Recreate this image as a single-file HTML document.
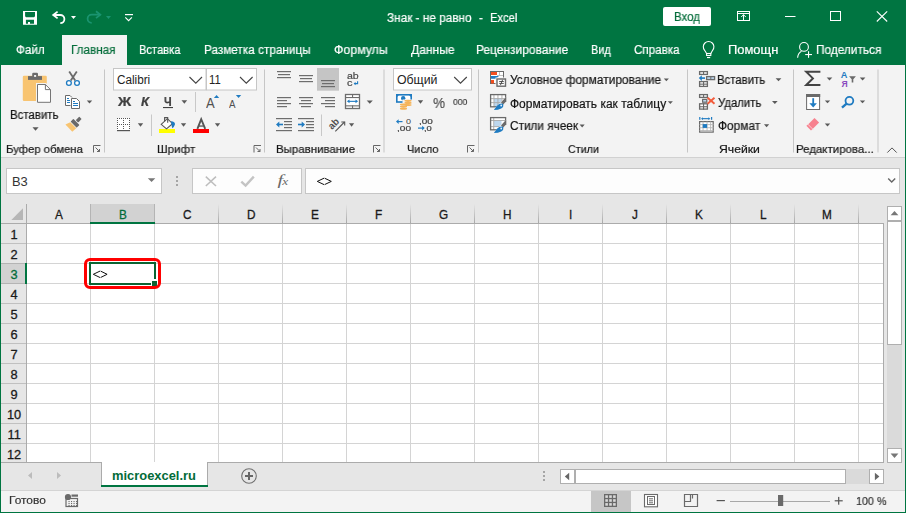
<!DOCTYPE html>
<html><head><meta charset="utf-8"><style>
*{margin:0;padding:0;box-sizing:border-box}
html,body{width:906px;height:513px;overflow:hidden;background:#e6e6e6;position:relative}
body{font-family:"Liberation Sans",sans-serif}
.t{position:absolute;white-space:pre;transform-origin:0 0;font-family:"Liberation Sans",sans-serif}
.g{will-change:transform;-webkit-text-stroke:0.2px currentColor}
.a{position:absolute}
svg{position:absolute;overflow:visible}
</style></head><body>
<div class="a" style="left:0;top:0;width:906px;height:65px;background:#007541"></div>
<div class="a" style="left:1px;top:65px;width:904px;height:92px;background:#f3f3f3"></div>
<div class="a" style="left:1px;top:157px;width:904px;height:1px;background:#d1d1d1"></div>
<div class="a" style="left:62px;top:35px;width:65px;height:30px;background:#f3f3f3"></div>
<div class="a" style="left:663px;top:7px;width:48px;height:19px;background:#fff;border-radius:2px"></div>
<div class="a" style="left:6px;top:168px;width:156px;height:26px;background:#fff;border:1px solid #c6c6c6"></div>
<div class="a" style="left:192px;top:168px;width:110px;height:26px;background:#fdfdfd;border:1px solid #c6c6c6"></div>
<div class="a" style="left:305px;top:168px;width:595px;height:26px;background:#fdfdfd;border:1px solid #c6c6c6"></div>
<div class="a" style="left:27px;top:224px;width:857px;height:239px;background:#fff"></div>
<svg style="left:0;top:0" width="906" height="513"><rect x="90" y="224" width="1" height="238" fill="#d4d4d4"/><rect x="154" y="224" width="1" height="238" fill="#d4d4d4"/><rect x="218" y="224" width="1" height="238" fill="#d4d4d4"/><rect x="282" y="224" width="1" height="238" fill="#d4d4d4"/><rect x="346" y="224" width="1" height="238" fill="#d4d4d4"/><rect x="410" y="224" width="1" height="238" fill="#d4d4d4"/><rect x="474" y="224" width="1" height="238" fill="#d4d4d4"/><rect x="538" y="224" width="1" height="238" fill="#d4d4d4"/><rect x="602" y="224" width="1" height="238" fill="#d4d4d4"/><rect x="666" y="224" width="1" height="238" fill="#d4d4d4"/><rect x="730" y="224" width="1" height="238" fill="#d4d4d4"/><rect x="794" y="224" width="1" height="238" fill="#d4d4d4"/><rect x="858" y="224" width="1" height="238" fill="#d4d4d4"/><rect x="27" y="243" width="856" height="1" fill="#d4d4d4"/><rect x="27" y="263" width="856" height="1" fill="#d4d4d4"/><rect x="27" y="283" width="856" height="1" fill="#d4d4d4"/><rect x="27" y="303" width="856" height="1" fill="#d4d4d4"/><rect x="27" y="323" width="856" height="1" fill="#d4d4d4"/><rect x="27" y="343" width="856" height="1" fill="#d4d4d4"/><rect x="27" y="363" width="856" height="1" fill="#d4d4d4"/><rect x="27" y="383" width="856" height="1" fill="#d4d4d4"/><rect x="27" y="403" width="856" height="1" fill="#d4d4d4"/><rect x="27" y="423" width="856" height="1" fill="#d4d4d4"/><rect x="27" y="443" width="856" height="1" fill="#d4d4d4"/></svg>
<div class="a" style="left:883px;top:223px;width:1px;height:240px;background:#ababab"></div>
<div class="a" style="left:1px;top:462px;width:883px;height:1px;background:#ababab"></div>
<div class="a" style="left:1px;top:223px;width:883px;height:1px;background:#ababab"></div>
<div class="a" style="left:26px;top:204px;width:1px;height:258px;background:#ababab"></div>
<svg style="left:0;top:0" width="906" height="513"><defs><linearGradient id="hg" x1="0" y1="0" x2="0" y2="1"><stop offset="0" stop-color="#e6e6e6"/><stop offset="1" stop-color="#a8a8a8"/></linearGradient></defs><rect x="90" y="204" width="1" height="19" fill="url(#hg)"/><rect x="154" y="204" width="1" height="19" fill="url(#hg)"/><rect x="218" y="204" width="1" height="19" fill="url(#hg)"/><rect x="282" y="204" width="1" height="19" fill="url(#hg)"/><rect x="346" y="204" width="1" height="19" fill="url(#hg)"/><rect x="410" y="204" width="1" height="19" fill="url(#hg)"/><rect x="474" y="204" width="1" height="19" fill="url(#hg)"/><rect x="538" y="204" width="1" height="19" fill="url(#hg)"/><rect x="602" y="204" width="1" height="19" fill="url(#hg)"/><rect x="666" y="204" width="1" height="19" fill="url(#hg)"/><rect x="730" y="204" width="1" height="19" fill="url(#hg)"/><rect x="794" y="204" width="1" height="19" fill="url(#hg)"/><rect x="858" y="204" width="1" height="19" fill="url(#hg)"/><rect x="1" y="243" width="25" height="1" fill="#c0c0c0"/><rect x="1" y="263" width="25" height="1" fill="#c0c0c0"/><rect x="1" y="283" width="25" height="1" fill="#c0c0c0"/><rect x="1" y="303" width="25" height="1" fill="#c0c0c0"/><rect x="1" y="323" width="25" height="1" fill="#c0c0c0"/><rect x="1" y="343" width="25" height="1" fill="#c0c0c0"/><rect x="1" y="363" width="25" height="1" fill="#c0c0c0"/><rect x="1" y="383" width="25" height="1" fill="#c0c0c0"/><rect x="1" y="403" width="25" height="1" fill="#c0c0c0"/><rect x="1" y="423" width="25" height="1" fill="#c0c0c0"/><rect x="1" y="443" width="25" height="1" fill="#c0c0c0"/><rect x="1" y="463" width="25" height="1" fill="#c0c0c0"/></svg>
<div class="a" style="left:91px;top:204px;width:63px;height:19px;background:#d2d2d2"></div>
<div class="a" style="left:90px;top:204px;width:1px;height:19px;background:#b4b4b4"></div>
<div class="a" style="left:154px;top:204px;width:1px;height:19px;background:#b4b4b4"></div>
<div class="a" style="left:90px;top:222px;width:65px;height:2px;background:#007541"></div>
<div class="a" style="left:1px;top:264px;width:25px;height:19px;background:#d2d2d2"></div>
<div class="a" style="left:1px;top:263px;width:25px;height:1px;background:#b4b4b4"></div>
<div class="a" style="left:1px;top:283px;width:25px;height:1px;background:#b4b4b4"></div>
<div class="a" style="left:25px;top:263px;width:2px;height:21px;background:#007541"></div>
<svg style="left:0;top:0" width="30" height="230"><polygon points="23,208.3 23,220 11.3,220" fill="#b6b6b6"/></svg>
<div class="a" style="left:89px;top:262px;width:67px;height:23px;border:2px solid #0b6433"></div>
<div class="a" style="left:151px;top:279px;width:7px;height:7px;background:#fff"></div>
<div class="a" style="left:152px;top:281px;width:5px;height:5px;background:#0b6433"></div>
<div class="a" style="left:84px;top:258px;width:77px;height:31px;border:3px solid #f00;border-radius:6px"></div>
<div class="a" style="left:887px;top:206px;width:15px;height:257px;background:#dadada"></div>
<div class="a" style="left:887px;top:206px;width:15px;height:15px;background:#fff;border:1px solid #afafaf"></div>
<div class="a" style="left:887px;top:221px;width:15px;height:124px;background:#fff;border:1px solid #afafaf"></div>
<div class="a" style="left:887px;top:448px;width:15px;height:15px;background:#fff;border:1px solid #afafaf"></div>
<div class="a" style="left:1px;top:463px;width:904px;height:27px;background:#e6e6e6"></div>
<div class="a" style="left:101px;top:462px;width:107px;height:25px;background:#fff;border-left:1px solid #ababab;border-right:1px solid #ababab"></div>
<div class="a" style="left:101px;top:485px;width:107px;height:2px;background:#007541"></div>
<div class="a" style="left:560px;top:469px;width:324px;height:15px;background:#dadada"></div>
<div class="a" style="left:560px;top:469px;width:15px;height:15px;background:#fff;border:1px solid #afafaf"></div>
<div class="a" style="left:575px;top:469px;width:271px;height:15px;background:#fff;border:1px solid #afafaf"></div>
<div class="a" style="left:869px;top:469px;width:15px;height:15px;background:#fff;border:1px solid #afafaf"></div>
<div class="a" style="left:1px;top:490px;width:904px;height:1px;background:#d4d4d4"></div>
<div class="a" style="left:1px;top:491px;width:904px;height:21px;background:#f3f3f3"></div>
<div class="a" style="left:591px;top:491px;width:40px;height:21px;background:#c6c6c6"></div>
<svg style="left:0;top:0" width="906" height="513" viewBox="0 0 906 513"><path d="M23,11 H37 V24.8 H23 Z M25.1,12.1 H35 V16.2 L34.1,17.2 H26 L25.1,16.2 Z M25.9,19.8 H34 V23.7 H30 V21.9 H28 V23.7 H25.9 Z" fill="#fff" stroke="none" stroke-width="1" fill-rule="evenodd"/>
<path d="M53.2,15 H60.3 A4.1,4.1 0 0 1 60.3,23.2" fill="none" stroke="#fff" stroke-width="1.8" />
<path d="M57.6,11.6 L53.2,15 L57.6,18.4" fill="none" stroke="#fff" stroke-width="1.8" stroke-linejoin="miter"/>
<polygon points="71,16 76,16 73.5,19" fill="#fff"/>
<path d="M100.3,14.7 H91.7 A4.1,4.1 0 0 0 91.7,22.9" fill="none" stroke="#1a9470" stroke-width="1.8" />
<path d="M96,11.3 L100.3,14.7 L96,18.1" fill="none" stroke="#1a9470" stroke-width="1.8" />
<polygon points="106,16 111,16 108.5,19" fill="#1a9470"/>
<rect x="125" y="14" width="8" height="1.2" fill="#fff"/>
<path d="M125.3,17.3 L128.6,20.6 L131.9,17.3" fill="none" stroke="#fff" stroke-width="1.1" />
<rect x="737.5" y="11.5" width="12" height="9" fill="none" stroke="#fff" stroke-width="1"/>
<line x1="738" y1="13.5" x2="749" y2="13.5" stroke="#fff" stroke-width="1" />
<line x1="743.5" y1="14.5" x2="743.5" y2="21" stroke="#fff" stroke-width="1" />
<path d="M741.2,17 L743.5,14.7 L745.8,17" fill="none" stroke="#fff" stroke-width="1" />
<rect x="785" y="16" width="10.5" height="1" fill="#fff"/>
<rect x="830.5" y="11.5" width="10" height="9" fill="none" stroke="#fff" stroke-width="1"/>
<line x1="876.8" y1="11.3" x2="887.2" y2="21.5" stroke="#fff" stroke-width="1.1" />
<line x1="887.2" y1="11.3" x2="876.8" y2="21.5" stroke="#fff" stroke-width="1.1" />
<path d="M706.6,53.5 L704.6,50.3 A5.3,5.3 0 1 1 712.6,50.3 L710.8,53.5 Z" fill="none" stroke="#fff" stroke-width="1.1" />
<rect x="706.6" y="53.5" width="4.2" height="2" fill="none" stroke="#fff" stroke-width="1.1"/>
<rect x="707" y="57" width="3.2" height="1.1" fill="#fff"/>
<circle cx="804" cy="46.9" r="4.4" fill="none" stroke="#fff" stroke-width="1.1"/>
<path d="M801.5,51.2 Q798,53 797.6,57.7" fill="none" stroke="#fff" stroke-width="1.1" />
<rect x="805.2" y="54" width="6.8" height="1.1" fill="#fff"/>
<rect x="808" y="51.2" width="1.1" height="6.6" fill="#fff"/>
<rect x="22.8" y="75.8" width="24" height="25.2" rx="1.2" fill="#f8c471"/>
<rect x="28" y="76.1" width="14" height="3.8" fill="#6b6b6b"/>
<rect x="32.2" y="72.8" width="5.8" height="4" rx="1.2" fill="#6b6b6b"/>
<rect x="34.1" y="75" width="2" height="1.9" fill="#f3f3f3"/>
<path d="M36,83 H46 L52,89 V103.8 H36 Z" fill="#f3f3f3" stroke="none" stroke-width="1" />
<path d="M37.5,84.5 H45.4 L50.5,89.6 V102.3 H37.5 Z" fill="#fff" stroke="#757575" stroke-width="1" />
<path d="M45.4,84.5 V89.6 H50.5" fill="none" stroke="#757575" stroke-width="1" />
<polygon points="32.5,127.2 38.6,127.2 35.55,130.7" fill="#5a5a5a"/>
<path d="M69.2,71.6 L75.2,80.6" fill="none" stroke="#6a6a6a" stroke-width="1.8" />
<path d="M76.8,71.6 L70.8,80.6" fill="none" stroke="#6a6a6a" stroke-width="1.8" />
<circle cx="68.9" cy="83" r="2.4" fill="#fff" stroke="#1f7bc1" stroke-width="1.3"/>
<circle cx="77" cy="83" r="2.4" fill="#fff" stroke="#1f7bc1" stroke-width="1.3"/>
<path d="M65.5,95.5 H70 L72,97.5 V105.5 H65.5 Z" fill="#fff" stroke="#6a6a6a" stroke-width="1" />
<rect x="67" y="98" width="2" height="1" fill="#1f7bc1"/>
<rect x="67" y="100" width="3" height="1" fill="#1f7bc1"/>
<rect x="67" y="102" width="3" height="1" fill="#1f7bc1"/>
<path d="M70.5,97.5 H77 L80,100.5 V109.5 H70.5 Z" fill="#f3f3f3" stroke="none" stroke-width="1" />
<path d="M71.5,98.5 H76.5 L79.5,101.5 V108.5 H71.5 Z" fill="#fff" stroke="#6a6a6a" stroke-width="1" />
<rect x="73" y="101" width="2" height="1" fill="#1f7bc1"/>
<rect x="73" y="103" width="5" height="1" fill="#1f7bc1"/>
<rect x="73" y="105" width="5" height="1" fill="#1f7bc1"/>
<polygon points="86.8,100.4 92.2,100.4 89.5,103.5" fill="#5a5a5a"/>
<g transform="translate(74.9,123.4) rotate(45)"><polygon points="-4.2,2.4 4.3,2.4 4.1,7.8 -6,7.4" fill="#f8c471"/><rect x="-4.3" y="-2.1" width="8.6" height="3.9" rx="0.6" fill="#6a6a6a"/><rect x="-1.7" y="-7.9" width="3.4" height="4.9" rx="0.5" fill="#6a6a6a"/></g>
<rect x="113.5" y="68.5" width="92.5" height="21.5" fill="#fff" stroke="#c6c6c6"/>
<rect x="206.5" y="68.5" width="50" height="21.5" fill="#fff" stroke="#c6c6c6"/>
<path d="M189.5,77 L195.8,83.2 L202,77" fill="none" stroke="#444" stroke-width="1.1" />
<path d="M240,77 L246.3,83.2 L252.6,77" fill="none" stroke="#444" stroke-width="1.1" />
<polygon points="181.5,100.2 187.2,100.2 184.35,103.7" fill="#5a5a5a"/>
<rect x="163" y="107" width="10" height="1.1" fill="#404040"/>
<polygon points="213.9,97.9 219.2,97.9 216.55,95" fill="#1f7bc1"/>
<polygon points="235.9,95 241.2,95 238.55,97.9" fill="#1f7bc1"/>
<rect x="195" y="92" width="1" height="20" fill="#c8c8c8"/>
<rect x="151" y="114.5" width="1" height="21.5" fill="#c8c8c8"/>
<rect x="321" y="114.5" width="1" height="21.5" fill="#c8c8c8"/>
<rect x="117" y="118" width="13" height="12" fill="#fff"/>
<rect x="117" y="118" width="1" height="1" fill="#555"/>
<rect x="117" y="124" width="1" height="1" fill="#555"/>
<rect x="119" y="118" width="1" height="1" fill="#555"/>
<rect x="119" y="124" width="1" height="1" fill="#555"/>
<rect x="121" y="118" width="1" height="1" fill="#555"/>
<rect x="121" y="124" width="1" height="1" fill="#555"/>
<rect x="123" y="118" width="1" height="1" fill="#555"/>
<rect x="123" y="124" width="1" height="1" fill="#555"/>
<rect x="125" y="118" width="1" height="1" fill="#555"/>
<rect x="125" y="124" width="1" height="1" fill="#555"/>
<rect x="127" y="118" width="1" height="1" fill="#555"/>
<rect x="127" y="124" width="1" height="1" fill="#555"/>
<rect x="129" y="118" width="1" height="1" fill="#555"/>
<rect x="129" y="124" width="1" height="1" fill="#555"/>
<rect x="117" y="120" width="1" height="1" fill="#555"/>
<rect x="123" y="120" width="1" height="1" fill="#555"/>
<rect x="129" y="120" width="1" height="1" fill="#555"/>
<rect x="117" y="122" width="1" height="1" fill="#555"/>
<rect x="123" y="122" width="1" height="1" fill="#555"/>
<rect x="129" y="122" width="1" height="1" fill="#555"/>
<rect x="117" y="126" width="1" height="1" fill="#555"/>
<rect x="123" y="126" width="1" height="1" fill="#555"/>
<rect x="129" y="126" width="1" height="1" fill="#555"/>
<rect x="117" y="128" width="1" height="1" fill="#555"/>
<rect x="123" y="128" width="1" height="1" fill="#555"/>
<rect x="129" y="128" width="1" height="1" fill="#555"/>
<rect x="117" y="130" width="13" height="1.2" fill="#555"/>
<polygon points="137.8,123.2 143.2,123.2 140.5,126.7" fill="#5a5a5a"/>
<rect x="159" y="129" width="16" height="4" fill="#ffff00"/>
<polygon points="161.2,124.3 167.4,118.7 172.5,123.7 166.5,128.8" fill="#fff" stroke="#555" stroke-width="1.1"/>
<path d="M164.6,121.4 V117.6 H167.7 V122.8" fill="none" stroke="#555" stroke-width="1.1" />
<path d="M170.8,121.3 Q175.5,121.5 174.9,124.5 Q174.2,127 172.2,128.2 Z" fill="#1f7bc1" stroke="none" stroke-width="1" />
<polygon points="180.9,123.3 186.2,123.3 183.55,126.7" fill="#5a5a5a"/>
<rect x="193" y="129" width="16" height="4" fill="#ff0000"/>
<path d="M197.4,128.8 L201.2,119.2 L205.2,128.8" fill="none" stroke="#555" stroke-width="1.9" />
<rect x="199" y="125.4" width="4.5" height="1.3" fill="#555"/>
<polygon points="214.9,123.3 220.2,123.3 217.55,126.7" fill="#5a5a5a"/>
<rect x="317" y="68" width="22" height="22.7" fill="#c5c5c5"/>
<rect x="277" y="71" width="14" height="1.2" fill="#6d6d6d"/>
<rect x="278" y="74" width="12" height="1.2" fill="#6d6d6d"/>
<rect x="277" y="77" width="14" height="1.2" fill="#6d6d6d"/>
<rect x="299" y="75" width="14" height="1.2" fill="#6d6d6d"/>
<rect x="300" y="78" width="12" height="1.2" fill="#6d6d6d"/>
<rect x="299" y="81" width="14" height="1.2" fill="#6d6d6d"/>
<rect x="321" y="80" width="14" height="1.2" fill="#6d6d6d"/>
<rect x="322" y="83" width="12" height="1.2" fill="#6d6d6d"/>
<rect x="321" y="86" width="14" height="1.2" fill="#6d6d6d"/>
<rect x="277" y="97" width="14" height="1.2" fill="#6d6d6d"/>
<rect x="277" y="100" width="10" height="1.2" fill="#6d6d6d"/>
<rect x="277" y="103" width="14" height="1.2" fill="#6d6d6d"/>
<rect x="277" y="106" width="10" height="1.2" fill="#6d6d6d"/>
<rect x="299" y="97" width="14" height="1.2" fill="#6d6d6d"/>
<rect x="301" y="100" width="10" height="1.2" fill="#6d6d6d"/>
<rect x="299" y="103" width="14" height="1.2" fill="#6d6d6d"/>
<rect x="301" y="106" width="10" height="1.2" fill="#6d6d6d"/>
<rect x="321" y="97" width="14" height="1.2" fill="#6d6d6d"/>
<rect x="325" y="100" width="10" height="1.2" fill="#6d6d6d"/>
<rect x="321" y="103" width="14" height="1.2" fill="#6d6d6d"/>
<rect x="325" y="106" width="10" height="1.2" fill="#6d6d6d"/>
<path d="M357.6,81.3 V83.6 H354.5" fill="none" stroke="#1f7bc1" stroke-width="1.1" />
<polygon points="353.6,83.6 355.6,82 355.6,85.2" fill="#1f7bc1"/>
<rect x="345.5" y="94.5" width="14" height="14" fill="#fff" stroke="#6d6d6d" stroke-width="1.3"/>
<rect x="345.5" y="97" width="14" height="1.1" fill="#6d6d6d"/>
<rect x="345.5" y="105.3" width="14" height="1.1" fill="#6d6d6d"/>
<rect x="352" y="94.5" width="1.1" height="3" fill="#6d6d6d"/>
<rect x="352" y="105.5" width="1.1" height="3" fill="#6d6d6d"/>
<rect x="348" y="100.8" width="9" height="1.1" fill="#1f7bc1"/>
<polygon points="346.9,101.35 349.5,99.4 349.5,103.3" fill="#1f7bc1"/>
<polygon points="358.1,101.35 355.5,99.4 355.5,103.3" fill="#1f7bc1"/>
<polygon points="366.7,100.5 372.8,100.5 369.75,103.7" fill="#5a5a5a"/>
<rect x="276" y="118" width="16" height="1.2" fill="#6d6d6d"/>
<rect x="276" y="130" width="16" height="1.2" fill="#6d6d6d"/>
<rect x="284" y="121" width="8" height="1.2" fill="#6d6d6d"/>
<rect x="284" y="124" width="8" height="1.2" fill="#6d6d6d"/>
<rect x="284" y="127" width="8" height="1.2" fill="#6d6d6d"/>
<rect x="278.5" y="123.7" width="4.5" height="1.6" fill="#1f7bc1"/>
<polygon points="276,124.5 279.3,121.6 279.3,127.4" fill="#1f7bc1"/>
<rect x="298" y="118" width="16" height="1.2" fill="#6d6d6d"/>
<rect x="298" y="130" width="16" height="1.2" fill="#6d6d6d"/>
<rect x="306" y="121" width="8" height="1.2" fill="#6d6d6d"/>
<rect x="306" y="124" width="8" height="1.2" fill="#6d6d6d"/>
<rect x="306" y="127" width="8" height="1.2" fill="#6d6d6d"/>
<rect x="298" y="123.7" width="4.5" height="1.6" fill="#1f7bc1"/>
<polygon points="305,124.5 301.7,121.6 301.7,127.4" fill="#1f7bc1"/>
<line x1="335.3" y1="131.3" x2="344.5" y2="122" stroke="#555" stroke-width="1.1" />
<path d="M341.3,122 H344.7 V125.4" fill="none" stroke="#555" stroke-width="1.1" />
<polygon points="349.0,123.2 354.2,123.2 351.6,126.7" fill="#5a5a5a"/>
<rect x="393.5" y="68.5" width="78" height="21.5" fill="#fff" stroke="#c6c6c6"/>
<path d="M454.2,77 L460.5,83.2 L466.8,77" fill="none" stroke="#444" stroke-width="1.1" />
<rect x="396.8" y="94.8" width="14.4" height="7.2" fill="#fff" stroke="#1f7bc1" stroke-width="1.6"/>
<polygon points="396,94 400,94 396,98" fill="#1f7bc1"/><polygon points="412,94 408,94 412,98" fill="#1f7bc1"/>
<circle cx="403.2" cy="98.3" r="2.2" fill="#1f7bc1"/>
<rect x="402.5" y="99.5" width="10" height="10.5" fill="#f3f3f3"/>
<ellipse cx="408" cy="100.8" rx="3.6" ry="1.1" fill="#f5b45a"/>
<ellipse cx="408" cy="102.9" rx="3.6" ry="1.1" fill="#f5b45a"/>
<ellipse cx="408" cy="105" rx="3.6" ry="1.1" fill="#f5b45a"/>
<ellipse cx="403.5" cy="104.5" rx="3.6" ry="1.1" fill="#f5b45a"/>
<ellipse cx="403.5" cy="106.6" rx="3.6" ry="1.1" fill="#f5b45a"/>
<ellipse cx="403.5" cy="108.7" rx="3.6" ry="1.1" fill="#f5b45a"/>
<polygon points="417.8,100.2 423.2,100.2 420.5,103.7" fill="#5a5a5a"/>
<rect x="397.5" y="121" width="5" height="1.2" fill="#1f7bc1"/>
<polygon points="396,121.6 398.6,119.2 398.6,124" fill="#1f7bc1"/>
<rect x="418" y="127.5" width="5.5" height="1.2" fill="#1f7bc1"/>
<polygon points="424.7,128.1 422.1,125.7 422.1,130.5" fill="#1f7bc1"/>
<rect x="490.5" y="71.5" width="13" height="12" fill="#fff" stroke="#6a6a6a" stroke-width="1"/>
<rect x="491" y="72" width="6" height="3" fill="#f24e1e"/>
<polygon points="491,76 499,76 496,78.8 491,78.8" fill="#1f7bc1"/>
<rect x="491" y="80" width="3" height="3.5" fill="#f24e1e"/>
<rect x="499" y="72" width="0.8" height="3.5" fill="#b0b0b0"/>
<rect x="497" y="75" width="6" height="0.8" fill="#b0b0b0"/>
<rect x="495.5" y="77.5" width="11.5" height="10" fill="#f3f3f3"/>
<rect x="497" y="79" width="8.5" height="7.2" fill="#fff" stroke="#6a6a6a" stroke-width="1.4"/>
<rect x="499.2" y="81" width="4.6" height="0.9" fill="#444"/>
<rect x="499.2" y="82.9" width="4.6" height="0.9" fill="#444"/>
<line x1="502.6" y1="79.8" x2="500.4" y2="85.2" stroke="#444" stroke-width="0.9" />
<rect x="490.6" y="94.6" width="15" height="12.2" fill="#fff"/>
<rect x="494" y="98.5" width="7.5" height="8" fill="#bdd7ee"/>
<rect x="493.5" y="95" width="0.9" height="12" fill="#a8a8a8"/>
<rect x="497.5" y="95" width="0.9" height="12" fill="#a8a8a8"/>
<rect x="501.5" y="95" width="0.9" height="12" fill="#a8a8a8"/>
<rect x="491" y="98.2" width="14.5" height="0.9" fill="#a8a8a8"/>
<rect x="491" y="102.2" width="14.5" height="0.9" fill="#a8a8a8"/>
<rect x="490.6" y="94.6" width="15" height="12.2" fill="none" stroke="#6a6a6a" stroke-width="1.3"/>
<polygon points="507.5,95.5 507.5,111 492,111" fill="#f3f3f3"/>
<polygon points="506.3,96.6 506.3,101.2 503.2,104.6 501,102.6" fill="#6a6a6a"/>
<path d="M493.9,109.9 Q495.6,106 499.2,104 Q502.4,102.6 503.4,104.6 Q504,106.8 501.2,108.4 Q498.2,109.9 493.9,109.9 Z" fill="#1f7bc1" stroke="none" stroke-width="1" />
<ellipse cx="501.2" cy="105.5" rx="0.9" ry="1.1" fill="#e8f1fa"/>
<rect x="490.6" y="117.6" width="15" height="12.2" fill="#fff"/>
<rect x="494" y="120.8" width="7.5" height="5.8" fill="#bdd7ee"/>
<rect x="493.3" y="118" width="0.9" height="12" fill="#a8a8a8"/>
<rect x="491" y="120.0" width="14.5" height="0.9" fill="#a8a8a8"/>
<rect x="491" y="126.2" width="14.5" height="0.9" fill="#a8a8a8"/>
<rect x="490.6" y="117.6" width="15" height="12.2" fill="none" stroke="#6a6a6a" stroke-width="1.3"/>
<polygon points="507.5,118.5 507.5,134 492,134" fill="#f3f3f3"/>
<polygon points="506.3,119.6 506.3,124.2 503.2,127.6 501,125.6" fill="#6a6a6a"/>
<path d="M493.9,132.9 Q495.6,129 499.2,127 Q502.4,125.6 503.4,127.6 Q504,129.8 501.2,131.4 Q498.2,132.9 493.9,132.9 Z" fill="#1f7bc1" stroke="none" stroke-width="1" />
<ellipse cx="501.2" cy="128.5" rx="0.9" ry="1.1" fill="#e8f1fa"/>
<polygon points="663.8,78.4 668.9000000000001,78.4 666.35,81.3" fill="#5a5a5a"/>
<polygon points="667.8,101.2 672.9000000000001,101.2 670.35,104.10000000000001" fill="#5a5a5a"/>
<polygon points="579.5999999999999,124.5 584.7,124.5 582.15,127.4" fill="#5a5a5a"/>
<rect x="699.6" y="71.6" width="7.8" height="2.8" fill="#fff" stroke="#6a6a6a" stroke-width="1.3"/>
<rect x="703.0" y="71" width="1.1" height="4" fill="#6a6a6a"/>
<rect x="699.6" y="81.6" width="7.8" height="4.8" fill="#fff" stroke="#6a6a6a" stroke-width="1.3"/>
<rect x="703.0" y="81" width="1.1" height="6" fill="#6a6a6a"/>
<rect x="699" y="83.6" width="9" height="1.1" fill="#6a6a6a"/>
<rect x="706.6" y="76.6" width="8" height="3" fill="#bdd7ee" stroke="#6a6a6a" stroke-width="1.3"/>
<rect x="710.3" y="76.6" width="1" height="3" fill="#6a6a6a"/>
<rect x="700.5" y="77.3" width="4.5" height="1.6" fill="#1f7bc1"/>
<polygon points="698.8,78.1 701.8,75.2 701.8,81" fill="#1f7bc1"/>
<polygon points="775.5999999999999,78.2 781.4000000000001,78.2 778.5,81.2" fill="#5a5a5a"/>
<rect x="699.6" y="94.6" width="7.8" height="2.8" fill="#fff" stroke="#6a6a6a" stroke-width="1.3"/>
<rect x="703.0" y="94" width="1.1" height="4" fill="#6a6a6a"/>
<rect x="702.6" y="99.4" width="4.2" height="2.8" fill="#bdd7ee" stroke="#6a6a6a" stroke-width="1.2"/>
<rect x="699.6" y="103.8" width="7.8" height="5.3" fill="#fff" stroke="#6a6a6a" stroke-width="1.3"/>
<rect x="703.0" y="103.2" width="1.1" height="6.5" fill="#6a6a6a"/>
<rect x="699" y="106.2" width="9" height="1.1" fill="#6a6a6a"/>
<line x1="707.6" y1="97.7" x2="714.5" y2="103.8" stroke="#f25c3c" stroke-width="1.9" />
<line x1="714.5" y1="97.7" x2="707.6" y2="103.8" stroke="#f25c3c" stroke-width="1.9" />
<polygon points="772.0,101.0 777.7,101.0 774.85,103.9" fill="#5a5a5a"/>
<rect x="699.2" y="117" width="1.2" height="2.8" fill="#1f7bc1"/>
<rect x="711" y="117" width="1.2" height="2.8" fill="#1f7bc1"/>
<rect x="702" y="118.1" width="7" height="1.1" fill="#1f7bc1"/>
<polygon points="701,118.65 703,117.2 703,120.1" fill="#1f7bc1"/><polygon points="710.4,118.65 708.4,117.2 708.4,120.1" fill="#1f7bc1"/>
<rect x="699.6" y="121.6" width="13.6" height="10.5" fill="#fff" stroke="#6a6a6a" stroke-width="1.2"/>
<rect x="702.6" y="121.5" width="0.9" height="10.5" fill="#b5b5b5"/>
<rect x="706.6" y="121.5" width="0.9" height="10.5" fill="#b5b5b5"/>
<rect x="710.2" y="121.5" width="0.9" height="10.5" fill="#b5b5b5"/>
<rect x="699.5" y="124.2" width="14" height="0.9" fill="#b5b5b5"/>
<rect x="699.5" y="127.3" width="14" height="0.9" fill="#b5b5b5"/>
<rect x="699.5" y="130.2" width="14" height="0.9" fill="#b5b5b5"/>
<rect x="702.7" y="124.1" width="4.4" height="3.8" fill="#1f7bc1"/>
<polygon points="764.0,124.2 769.2,124.2 766.6,127.3" fill="#5a5a5a"/>
<path d="M820.4,71.7 H806.2 L812.9,78.4 L806.2,85.1 H820.4" fill="none" stroke="#444" stroke-width="2" stroke-linejoin="miter"/>
<polygon points="826.6999999999999,77.5 832.3000000000001,77.5 829.5,80.5" fill="#5a5a5a"/>
<text x="840.8" y="78" font-family="Liberation Sans" font-weight="700" font-size="9.2" fill="#1f7bc1">A</text>
<text x="841.4" y="87.2" font-family="Liberation Sans" font-weight="700" font-size="8.6" fill="#8a4bbf">Я</text>
<polygon points="849.1,76.2 855.9,76.2 853.3,79.3 853.3,82.6 851.7,82.6 851.7,79.3" fill="#6a6a6a"/>
<polygon points="859.8,77.5 865.4000000000001,77.5 862.6,80.5" fill="#5a5a5a"/>
<rect x="806.6" y="94.5" width="13" height="15" fill="#fff" stroke="#6a6a6a" stroke-width="1"/>
<rect x="806.1" y="94" width="14.1" height="3" fill="#6a6a6a"/>
<rect x="812.3" y="98.2" width="1.8" height="6.5" fill="#1f7bc1"/>
<polygon points="809.4,103.3 816.9,103.3 813.2,107.6" fill="#1f7bc1"/>
<polygon points="824.8,100.4 830.2,100.4 827.5,103.3" fill="#5a5a5a"/>
<circle cx="849.4" cy="100.8" r="3.9" fill="none" stroke="#1f7bc1" stroke-width="1.8"/>
<line x1="846.6" y1="103.7" x2="842" y2="107.6" stroke="#1f7bc1" stroke-width="2.4" />
<polygon points="859.8,100.4 865.2,100.4 862.5,103.3" fill="#5a5a5a"/>
<polygon points="814.5,117.9 819.1,122.5 812.6,129 808,124.4" fill="#f7818f"/>
<polygon points="808,124.4 812.6,129 811,130.4 806.4,125.8" fill="#f7818f"/>
<line x1="807.5" y1="123.8" x2="813.2" y2="129.6" stroke="#fbd0d5" stroke-width="0.8" />
<polygon points="824.8,123.60000000000001 830.2,123.60000000000001 827.5,126.5" fill="#5a5a5a"/>
<path d="M887.3,152.6 L892,147.9 L896.7,152.6" fill="none" stroke="#555" stroke-width="1" />
<rect x="104" y="69.5" width="1" height="83" fill="#c6c6c6"/>
<rect x="264" y="69.5" width="1" height="83" fill="#c6c6c6"/>
<rect x="383.5" y="69.5" width="1" height="83" fill="#c6c6c6"/>
<rect x="478" y="69.5" width="1" height="83" fill="#c6c6c6"/>
<rect x="687" y="69.5" width="1" height="83" fill="#c6c6c6"/>
<rect x="793" y="69.5" width="1" height="83" fill="#c6c6c6"/>
<rect x="877.5" y="69.5" width="1" height="83" fill="#c6c6c6"/>
<path d="M93.5,152.5 V145.5 H100.5" fill="none" stroke="#666" stroke-width="1" />
<path d="M95.5,147.5 L99.5,151.5 M99.5,149 V151.5 H97" fill="none" stroke="#666" stroke-width="1" />
<path d="M254.0,152.5 V145.5 H261.0" fill="none" stroke="#666" stroke-width="1" />
<path d="M256.0,147.5 L260.0,151.5 M260.0,149 V151.5 H257.5" fill="none" stroke="#666" stroke-width="1" />
<path d="M373.5,152.5 V145.5 H380.5" fill="none" stroke="#666" stroke-width="1" />
<path d="M375.5,147.5 L379.5,151.5 M379.5,149 V151.5 H377" fill="none" stroke="#666" stroke-width="1" />
<path d="M467.5,152.5 V145.5 H474.5" fill="none" stroke="#666" stroke-width="1" />
<path d="M469.5,147.5 L473.5,151.5 M473.5,149 V151.5 H471" fill="none" stroke="#666" stroke-width="1" />
<polygon points="147.8,178.2 155.3,178.2 151.55,182" fill="#777"/>
<rect x="176" y="176" width="2" height="2" fill="#a5a5a5"/>
<rect x="176" y="180" width="2" height="2" fill="#a5a5a5"/>
<rect x="176" y="184" width="2" height="2" fill="#a5a5a5"/>
<line x1="205.8" y1="176.6" x2="216" y2="186" stroke="#bdbdbd" stroke-width="1.5" />
<line x1="216" y1="176.6" x2="205.8" y2="186" stroke="#bdbdbd" stroke-width="1.5" />
<path d="M241.3,181.6 L245.6,185.6 L253.8,176.6" fill="none" stroke="#c4c4c4" stroke-width="2.4" />
<path d="M888.2,178.6 L891.7,182.1 L895.2,178.6" fill="none" stroke="#666" stroke-width="1.4" />
<text x="277.5" y="185" font-family="Liberation Serif" font-style="italic" font-size="14" fill="#6a6a6a" transform="translate(277.5 185) scale(1.45 1) translate(-277.5 -185)">f</text>
<text x="282.3" y="185" font-family="Liberation Serif" font-style="italic" font-size="9.5" fill="#6a6a6a" transform="translate(282.3 185) scale(1.4 1) translate(-282.3 -185)">x</text>
<path d="M324,178.2 L317.3,181.4 L324,184.6 M324.6,178.2 L331.3,181.4 L324.6,184.6" fill="none" stroke="#111" stroke-width="1.0" />
<path d="M100,271.1 L93.3,274.3 L100,277.5 M100.6,271.1 L107.1,274.3 L100.6,277.5" fill="none" stroke="#111" stroke-width="1.0" />
<polygon points="890.6,215.2 898.4,215.2 894.5,210.9" fill="#777"/>
<polygon points="890.6,453.6 898.4,453.6 894.5,457.9" fill="#777"/>
<polygon points="569.2,472.8 569.2,480.2 564.8,476.5" fill="#666"/>
<polygon points="874.9,472.8 874.9,480.2 879.4,476.5" fill="#666"/>
<polygon points="32,472 32,479 28,475.5" fill="#bcbcbc"/>
<polygon points="57,472 57,479 61,475.5" fill="#bcbcbc"/>
<circle cx="249" cy="476" r="7.3" fill="none" stroke="#707070" stroke-width="1.1"/>
<rect x="245" y="475" width="8" height="2" fill="#666"/>
<rect x="248" y="472" width="2" height="8" fill="#666"/>
<rect x="543" y="471" width="2" height="2" fill="#a5a5a5"/>
<rect x="543" y="475" width="2" height="2" fill="#a5a5a5"/>
<rect x="543" y="479" width="2" height="2" fill="#a5a5a5"/>
<circle cx="68" cy="497" r="3.1" fill="#6a6a6a"/>
<rect x="71.5" y="494.5" width="6.5" height="2.2" fill="#6a6a6a"/>
<rect x="66" y="498.5" width="11.5" height="8" fill="none" stroke="#6a6a6a" stroke-width="1.2"/>
<rect x="68.5" y="501" width="1.1" height="1.1" fill="#6a6a6a"/>
<rect x="68.5" y="503" width="1.1" height="1.1" fill="#6a6a6a"/>
<rect x="68.5" y="505" width="1.1" height="1.1" fill="#6a6a6a"/>
<rect x="71" y="501" width="1.1" height="1.1" fill="#6a6a6a"/>
<rect x="71" y="503" width="1.1" height="1.1" fill="#6a6a6a"/>
<rect x="71" y="505" width="1.1" height="1.1" fill="#6a6a6a"/>
<rect x="73.5" y="501" width="1.1" height="1.1" fill="#6a6a6a"/>
<rect x="73.5" y="503" width="1.1" height="1.1" fill="#6a6a6a"/>
<rect x="73.5" y="505" width="1.1" height="1.1" fill="#6a6a6a"/>
<rect x="76" y="501" width="1.1" height="1.1" fill="#6a6a6a"/>
<rect x="76" y="503" width="1.1" height="1.1" fill="#6a6a6a"/>
<rect x="76" y="505" width="1.1" height="1.1" fill="#6a6a6a"/>
<rect x="604" y="494" width="13" height="13" fill="#6a6a6a"/>
<rect x="605.3" y="495.3" width="2.6" height="2.6" fill="#dadada"/>
<rect x="605.3" y="499.2" width="2.6" height="2.6" fill="#dadada"/>
<rect x="605.3" y="503.1" width="2.6" height="2.6" fill="#dadada"/>
<rect x="609.2" y="495.3" width="2.6" height="2.6" fill="#dadada"/>
<rect x="609.2" y="499.2" width="2.6" height="2.6" fill="#dadada"/>
<rect x="609.2" y="503.1" width="2.6" height="2.6" fill="#dadada"/>
<rect x="613.1" y="495.3" width="2.6" height="2.6" fill="#dadada"/>
<rect x="613.1" y="499.2" width="2.6" height="2.6" fill="#dadada"/>
<rect x="613.1" y="503.1" width="2.6" height="2.6" fill="#dadada"/>
<rect x="644.5" y="494.5" width="13" height="12.3" fill="#fff" stroke="#6a6a6a" stroke-width="1.1"/>
<rect x="647.5" y="496.5" width="7" height="8" fill="#fff" stroke="#6a6a6a" stroke-width="1"/>
<rect x="649" y="498.3" width="4" height="1" fill="#6a6a6a"/>
<rect x="649" y="500.3" width="4" height="1" fill="#6a6a6a"/>
<rect x="649" y="502.3" width="4" height="1" fill="#6a6a6a"/>
<path d="M684.5,494.5 H697.5 V506.5 H684.5 Z M684.5,501.5 H690.5 V494.5 M692.5,494.5 V498.5" fill="none" stroke="#6a6a6a" stroke-width="1.2" />
<rect x="716.6" y="500" width="8.3" height="1.2" fill="#555"/>
<rect x="730" y="501" width="100" height="1" fill="#a8a8a8"/>
<rect x="778" y="495" width="5.2" height="11" fill="#6a6a6a"/>
<rect x="834.7" y="500.2" width="8" height="1.2" fill="#555"/>
<rect x="838.1" y="496.9" width="1.2" height="7.8" fill="#555"/></svg>
<div class="t" style="left:327.5px;top:118.5px;font-size:10px;line-height:10px;font-weight:700;color:#505050;transform:rotate(-45deg) scaleX(0.95);transform-origin:50% 50%">ab</div>
<div class="a" style="left:0;top:0;width:1px;height:513px;background:#007541"></div>
<div class="a" style="left:905px;top:0;width:1px;height:513px;background:#007541"></div>
<div class="a" style="left:0;top:512px;width:906px;height:1px;background:#007541"></div>
<div class="t g" style="left:387.00px;top:12.17px;font-size:12.5px;line-height:12.5px;color:#fff;font-weight:400;transform:scaleX(0.9433);">Знак - не равно</div>
<div class="t g" style="left:479.30px;top:12.17px;font-size:12.5px;line-height:12.5px;color:#fff;font-weight:400;transform:scaleX(0.9250);">-</div>
<div class="t g" style="left:489.70px;top:12.17px;font-size:12.5px;line-height:12.5px;color:#fff;font-weight:400;transform:scaleX(0.8966);">Excel</div>
<div class="t g" style="left:673.76px;top:11.01px;font-size:12.2px;line-height:12.2px;color:#036c39;font-weight:400;transform:scaleX(0.9407);">Вход</div>
<div class="t g" style="left:16.30px;top:44.17px;font-size:12.5px;line-height:12.5px;color:#fff;font-weight:400;transform:scaleX(0.9333);">Файл</div>
<div class="t g" style="left:71.46px;top:44.17px;font-size:12.5px;line-height:12.5px;color:#036c39;font-weight:400;transform:scaleX(0.9370);">Главная</div>
<div class="t g" style="left:138.61px;top:44.17px;font-size:12.5px;line-height:12.5px;color:#fff;font-weight:400;transform:scaleX(0.8935);">Вставка</div>
<div class="t g" style="left:203.86px;top:44.17px;font-size:12.5px;line-height:12.5px;color:#fff;font-weight:400;transform:scaleX(0.9402);">Разметка страницы</div>
<div class="t g" style="left:334.30px;top:44.17px;font-size:12.5px;line-height:12.5px;color:#fff;font-weight:400;transform:scaleX(0.9870);">Формулы</div>
<div class="t g" style="left:410.80px;top:44.17px;font-size:12.5px;line-height:12.5px;color:#fff;font-weight:400;transform:scaleX(0.9644);">Данные</div>
<div class="t g" style="left:476.24px;top:44.17px;font-size:12.5px;line-height:12.5px;color:#fff;font-weight:400;transform:scaleX(0.9568);">Рецензирование</div>
<div class="t g" style="left:590.82px;top:44.17px;font-size:12.5px;line-height:12.5px;color:#fff;font-weight:400;transform:scaleX(0.8773);">Вид</div>
<div class="t g" style="left:634.30px;top:44.17px;font-size:12.5px;line-height:12.5px;color:#fff;font-weight:400;transform:scaleX(0.9306);">Справка</div>
<div class="t g" style="left:727.67px;top:44.17px;font-size:12.5px;line-height:12.5px;color:#fff;font-weight:400;transform:scaleX(1.0340);">Помощн</div>
<div class="t g" style="left:815.55px;top:44.17px;font-size:12.5px;line-height:12.5px;color:#fff;font-weight:400;transform:scaleX(0.9471);">Поделиться</div>
<div class="t g" style="left:5.54px;top:144.22px;font-size:11.8px;line-height:11.8px;color:#161616;font-weight:400;transform:scaleX(0.9595);">Буфер обмена</div>
<div class="t g" style="left:157.32px;top:144.22px;font-size:11.8px;line-height:11.8px;color:#161616;font-weight:400;transform:scaleX(0.9842);">Шрифт</div>
<div class="t g" style="left:276.43px;top:144.22px;font-size:11.8px;line-height:11.8px;color:#161616;font-weight:400;transform:scaleX(0.9725);">Выравнивание</div>
<div class="t g" style="left:406.77px;top:144.22px;font-size:11.8px;line-height:11.8px;color:#161616;font-weight:400;transform:scaleX(0.9303);">Число</div>
<div class="t g" style="left:567.60px;top:144.22px;font-size:11.8px;line-height:11.8px;color:#161616;font-weight:400;transform:scaleX(0.9088);">Стили</div>
<div class="t g" style="left:718.97px;top:144.22px;font-size:11.8px;line-height:11.8px;color:#161616;font-weight:400;transform:scaleX(1.0342);">Ячейки</div>
<div class="t g" style="left:796.23px;top:144.22px;font-size:11.8px;line-height:11.8px;color:#161616;font-weight:400;transform:scaleX(0.9718);">Редактирова...</div>
<div class="t g" style="left:10.25px;top:108.51px;font-size:12px;line-height:12px;color:#161616;font-weight:400;transform:scaleX(0.9540);">Вставить</div>
<div class="t" style="left:116.70px;top:73.91px;font-size:12px;line-height:12px;color:#222;font-weight:400;transform:scaleX(0.9765);">Calibri</div>
<div class="t" style="left:208.76px;top:73.91px;font-size:12px;line-height:12px;color:#222;font-weight:400;transform:scaleX(0.9364);">11</div>
<div class="t" style="left:396.50px;top:73.91px;font-size:12px;line-height:12px;color:#222;font-weight:400;transform:scaleX(1.0256);">Общий</div>
<div class="t g" style="left:509.60px;top:74.11px;font-size:12px;line-height:12px;color:#161616;font-weight:400;transform:scaleX(0.9895);">Условное форматирование</div>
<div class="t g" style="left:509.60px;top:97.51px;font-size:12px;line-height:12px;color:#161616;font-weight:400;">Форматировать как таблицу</div>
<div class="t g" style="left:509.60px;top:120.41px;font-size:12px;line-height:12px;color:#161616;font-weight:400;transform:scaleX(0.9826);">Стили ячеек</div>
<div class="t g" style="left:717.35px;top:74.11px;font-size:12px;line-height:12px;color:#161616;font-weight:400;transform:scaleX(0.9480);">Вставить</div>
<div class="t g" style="left:718.30px;top:96.81px;font-size:12px;line-height:12px;color:#161616;font-weight:400;transform:scaleX(0.9457);">Удалить</div>
<div class="t g" style="left:718.30px;top:120.41px;font-size:12px;line-height:12px;color:#161616;font-weight:400;transform:scaleX(0.9884);">Формат</div>
<div class="t" style="left:12.05px;top:176.20px;font-size:12.3px;line-height:12.3px;color:#333;font-weight:400;transform:scaleX(1.0500);">B3</div>
<div class="t g" style="left:8.89px;top:494.82px;font-size:11.8px;line-height:11.8px;color:#333;font-weight:400;transform:scaleX(1.0114);">Готово</div>
<div class="t g" style="left:855.59px;top:495.52px;font-size:11.8px;line-height:11.8px;color:#333;font-weight:400;transform:scaleX(0.9125);">100 %</div>
<div class="t" style="left:112.27px;top:470.02px;font-size:12.5px;line-height:12.5px;color:#036c39;font-weight:700;transform:scaleX(1.0325);">microexcel.ru</div>
<div class="t g" style="left:117.70px;top:96.02px;font-size:12.5px;line-height:12.5px;color:#404040;font-weight:700;transform:scaleX(1.1636);">Ж</div>
<div class="t g" style="left:141.10px;top:96.02px;font-size:12.5px;line-height:12.5px;color:#404040;font-weight:700;font-style:italic;transform:scaleX(1.0500);">К</div>
<div class="t g" style="left:164.10px;top:96.02px;font-size:12.5px;line-height:12.5px;color:#404040;font-weight:700;transform:scaleX(0.8625);">Ч</div>
<div class="t" style="left:206.20px;top:95.94px;font-size:14px;line-height:14px;color:#505050;font-weight:400;transform:scaleX(0.9300);">A</div>
<div class="t" style="left:229.30px;top:99.05px;font-size:11px;line-height:11px;color:#505050;font-weight:400;transform:scaleX(0.8875);">A</div>
<div class="t g" style="left:346.90px;top:71.15px;font-size:9.5px;line-height:9.5px;color:#4a4a4a;font-weight:400;transform:scaleX(1.1091);">ab</div>
<div class="t g" style="left:347.10px;top:77.75px;font-size:9.5px;line-height:9.5px;color:#4a4a4a;font-weight:400;transform:scaleX(1.1500);">c</div>
<div class="t g" style="left:432.80px;top:95.29px;font-size:15px;line-height:15px;color:#505050;font-weight:400;transform:scaleX(0.9000);">%</div>
<div class="t g" style="left:453.00px;top:97.23px;font-size:9.8px;line-height:9.8px;color:#404040;font-weight:400;transform:scaleX(0.8687);">000</div>
<div class="t" style="left:405.90px;top:117.80px;font-size:8px;line-height:8px;color:#404040;font-weight:400;transform:scaleX(1.1250);">0</div>
<div class="t g" style="left:396.54px;top:125.40px;font-size:8px;line-height:8px;color:#404040;font-weight:400;transform:scaleX(1.2600);">,00</div>
<div class="t g" style="left:418.56px;top:117.80px;font-size:8px;line-height:8px;color:#404040;font-weight:400;transform:scaleX(1.2400);">,00</div>
<div class="t g" style="left:424.03px;top:125.40px;font-size:8px;line-height:8px;color:#404040;font-weight:400;transform:scaleX(1.1667);">,0</div>
<div class="t" style="left:55.06px;top:209.18px;font-size:12.8px;line-height:12.8px;color:#1a1a1a;font-weight:400;-webkit-text-stroke:0.3px currentColor;transform:scaleX(0.9200);">A</div>
<div class="t" style="left:119.06px;top:209.18px;font-size:12.8px;line-height:12.8px;color:#036c39;font-weight:400;-webkit-text-stroke:0.3px currentColor;transform:scaleX(0.9200);">B</div>
<div class="t" style="left:183.06px;top:209.18px;font-size:12.8px;line-height:12.8px;color:#1a1a1a;font-weight:400;-webkit-text-stroke:0.3px currentColor;transform:scaleX(0.9200);">C</div>
<div class="t" style="left:246.60px;top:209.18px;font-size:12.8px;line-height:12.8px;color:#1a1a1a;font-weight:400;-webkit-text-stroke:0.3px currentColor;transform:scaleX(0.9200);">D</div>
<div class="t" style="left:310.60px;top:209.18px;font-size:12.8px;line-height:12.8px;color:#1a1a1a;font-weight:400;-webkit-text-stroke:0.3px currentColor;transform:scaleX(0.9200);">E</div>
<div class="t" style="left:375.06px;top:209.18px;font-size:12.8px;line-height:12.8px;color:#1a1a1a;font-weight:400;-webkit-text-stroke:0.3px currentColor;transform:scaleX(0.9200);">F</div>
<div class="t" style="left:438.60px;top:209.18px;font-size:12.8px;line-height:12.8px;color:#1a1a1a;font-weight:400;-webkit-text-stroke:0.3px currentColor;transform:scaleX(0.9200);">G</div>
<div class="t" style="left:502.60px;top:209.18px;font-size:12.8px;line-height:12.8px;color:#1a1a1a;font-weight:400;-webkit-text-stroke:0.3px currentColor;transform:scaleX(0.9200);">H</div>
<div class="t" style="left:569.36px;top:209.18px;font-size:12.8px;line-height:12.8px;color:#1a1a1a;font-weight:400;-webkit-text-stroke:0.3px currentColor;transform:scaleX(0.9200);">I</div>
<div class="t" style="left:632.44px;top:209.18px;font-size:12.8px;line-height:12.8px;color:#1a1a1a;font-weight:400;-webkit-text-stroke:0.3px currentColor;transform:scaleX(0.9200);">J</div>
<div class="t" style="left:694.60px;top:209.18px;font-size:12.8px;line-height:12.8px;color:#1a1a1a;font-weight:400;-webkit-text-stroke:0.3px currentColor;transform:scaleX(0.9200);">K</div>
<div class="t" style="left:759.52px;top:209.18px;font-size:12.8px;line-height:12.8px;color:#1a1a1a;font-weight:400;-webkit-text-stroke:0.3px currentColor;transform:scaleX(0.9200);">L</div>
<div class="t" style="left:822.14px;top:209.18px;font-size:12.8px;line-height:12.8px;color:#1a1a1a;font-weight:400;-webkit-text-stroke:0.3px currentColor;transform:scaleX(0.9200);">M</div>
<div class="t" style="left:10.50px;top:229.18px;font-size:12.8px;line-height:12.8px;color:#1a1a1a;font-weight:400;-webkit-text-stroke:0.3px currentColor;">1</div>
<div class="t" style="left:10.50px;top:249.18px;font-size:12.8px;line-height:12.8px;color:#1a1a1a;font-weight:400;-webkit-text-stroke:0.3px currentColor;">2</div>
<div class="t" style="left:10.50px;top:269.18px;font-size:12.8px;line-height:12.8px;color:#036c39;font-weight:400;-webkit-text-stroke:0.3px currentColor;">3</div>
<div class="t" style="left:10.50px;top:289.18px;font-size:12.8px;line-height:12.8px;color:#1a1a1a;font-weight:400;-webkit-text-stroke:0.3px currentColor;">4</div>
<div class="t" style="left:10.50px;top:309.18px;font-size:12.8px;line-height:12.8px;color:#1a1a1a;font-weight:400;-webkit-text-stroke:0.3px currentColor;">5</div>
<div class="t" style="left:10.50px;top:329.18px;font-size:12.8px;line-height:12.8px;color:#1a1a1a;font-weight:400;-webkit-text-stroke:0.3px currentColor;">6</div>
<div class="t" style="left:10.50px;top:349.18px;font-size:12.8px;line-height:12.8px;color:#1a1a1a;font-weight:400;-webkit-text-stroke:0.3px currentColor;">7</div>
<div class="t" style="left:10.50px;top:369.18px;font-size:12.8px;line-height:12.8px;color:#1a1a1a;font-weight:400;-webkit-text-stroke:0.3px currentColor;">8</div>
<div class="t" style="left:10.50px;top:389.18px;font-size:12.8px;line-height:12.8px;color:#1a1a1a;font-weight:400;-webkit-text-stroke:0.3px currentColor;">9</div>
<div class="t" style="left:7.00px;top:409.18px;font-size:12.8px;line-height:12.8px;color:#1a1a1a;font-weight:400;-webkit-text-stroke:0.3px currentColor;">10</div>
<div class="t" style="left:7.50px;top:429.18px;font-size:12.8px;line-height:12.8px;color:#1a1a1a;font-weight:400;-webkit-text-stroke:0.3px currentColor;">11</div>
<div class="t" style="left:7.00px;top:449.18px;font-size:12.8px;line-height:12.8px;color:#1a1a1a;font-weight:400;-webkit-text-stroke:0.3px currentColor;">12</div>
</body></html>
